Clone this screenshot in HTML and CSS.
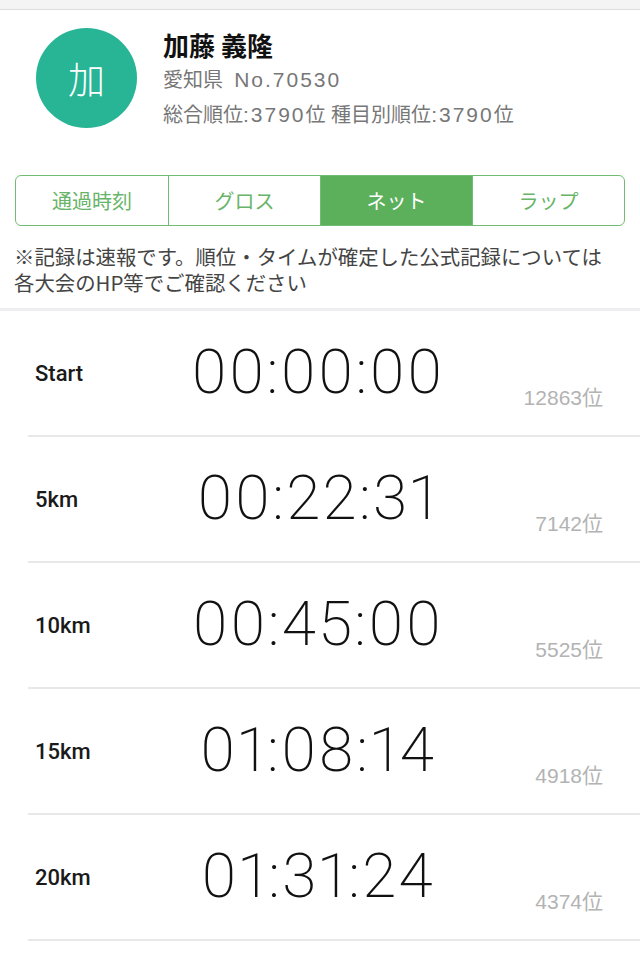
FILE: index.html
```html
<!DOCTYPE html>
<html lang="ja">
<head>
<meta charset="utf-8">
<title>記録</title>
<link rel="stylesheet" href="styles.css">
</head>
<body>
<div class="topbar"></div>
<section class="profile">
  <div class="avatar">加</div>
  <div class="info">
    <div class="name">加藤 義隆</div>
    <div class="meta">愛知県&nbsp;&nbsp;<span class="num">No.70530</span></div>
    <div class="meta">総合順位<span class="num">:3790</span>位 種目別順位<span class="num">:3790</span>位</div>
  </div>
</section>
<nav class="tabs">
  <div class="tab">通過時刻</div>
  <div class="tab">グロス</div>
  <div class="tab active">ネット</div>
  <div class="tab">ラップ</div>
</nav>
<p class="note">※記録は速報です。順位・タイムが確定した公式記録については<br>各大会のHP等でご確認ください</p>
<div class="list">
  <div class="row"><div class="label">Start</div><div class="time">00:00:00</div><div class="rank">12863位</div></div>
  <div class="row"><div class="label">5km</div><div class="time">00:22:31</div><div class="rank">7142位</div></div>
  <div class="row"><div class="label">10km</div><div class="time">00:45:00</div><div class="rank">5525位</div></div>
  <div class="row"><div class="label">15km</div><div class="time">01:08:14</div><div class="rank">4918位</div></div>
  <div class="row"><div class="label">20km</div><div class="time">01:31:24</div><div class="rank">4374位</div></div>
</div>
</body>
</html>
```
FILE: styles.css
```css
* { box-sizing: border-box; }
html, body { margin: 0; padding: 0; background: #fff; }
body {
  width: 640px;
  font-family: "Liberation Sans", "Noto Sans CJK JP", sans-serif;
  color: #222;
}
.topbar {
  height: 10px;
  background: #f4f4f4;
  border-bottom: 1px solid #dedede;
}
.profile {
  display: flex;
  align-items: flex-start;
  padding: 18px 0 0 36px;
}
.avatar {
  width: 101px;
  height: 100px;
  border-radius: 50%;
  background: #27b595;
  color: #fff;
  font-family: "Noto Sans CJK JP", sans-serif;
  font-size: 37px;
  font-weight: 300;
  display: flex;
  align-items: center;
  justify-content: center;
  flex-shrink: 0;
}
.info {
  margin-left: 26px;
  margin-top: -1px;
}
.name {
  font-family: "Noto Sans CJK JP", sans-serif;
  font-weight: 700;
  font-size: 26px;
  line-height: 35px;
  height: 35px;
  color: #111;
}
.meta {
  font-size: 20px;
  line-height: 35px;
  height: 35px;
  color: #777;
}
.num { font-size: 21px; letter-spacing: 2px; }
.tabs {
  display: grid;
  grid-template-columns: repeat(4, 1fr);
  margin: 43px 15px 0;
  height: 51px;
  border: 1.5px solid #72bb72;
  border-radius: 6px;
  overflow: hidden;
}
.tab {
  display: flex;
  align-items: center;
  justify-content: center;
  font-family: "Noto Sans CJK JP", sans-serif;
  font-size: 20px;
  color: #68b468;
  border-left: 1.5px solid #72bb72;
}
.tab:first-child { border-left: none; }
.tab.active {
  background: #5cb05c;
  color: #fff;
}
.note {
  margin: 0;
  padding: 17px 0 13px 14px;
  font-family: "Noto Sans CJK JP", sans-serif;
  font-size: 20.4px;
  line-height: 26px;
  color: #444;
  border-bottom: 3px solid #eeeef2;
}
.row {
  display: grid;
  grid-template-columns: 1fr auto 1fr;
  height: 126px;
  padding: 0 37px 0 35px;
  background: linear-gradient(#e8e8e8, #e8e8e8) 28px 100% / calc(100% - 28px) 2px no-repeat;
}
.label {
  align-self: center;
  font-family: "Roboto", sans-serif;
  font-weight: 500;
  font-size: 22px;
  color: #1a1a1a;
  margin-bottom: 2px;
}
.time {
  align-self: center;
  font-family: "Roboto", sans-serif;
  font-weight: 200;
  font-size: 62px;
  font-variant-numeric: proportional-nums;
  letter-spacing: 2.2px;
  line-height: 1;
  color: #111;
  margin-bottom: 4px;
  margin-left: -2px;
}
.rank {
  align-self: end;
  justify-self: end;
  font-family: "Liberation Sans", "Noto Sans CJK JP", sans-serif;
  font-size: 21px;
  line-height: 24px;
  color: #b3b3b3;
  padding-bottom: 27px;
}
```
